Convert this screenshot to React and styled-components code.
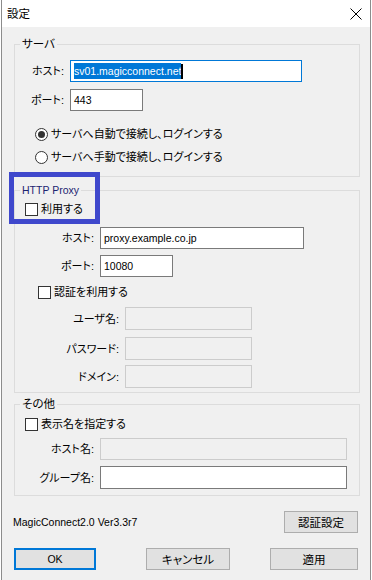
import React from "react";
import styled, { createGlobalStyle } from "styled-components";

const GlobalStyle = createGlobalStyle`
  html, body { margin: 0; padding: 0; background: #fff; }
  body {
    font-family: "Liberation Sans", "Noto Sans CJK JP", sans-serif;
    font-size: 11px;
    line-height: 16px;
    color: #000;
    font-feature-settings: "palt";
  }
`;

const Window = styled.div`
  position: relative;
  box-sizing: border-box;
  width: 370px;
  min-height: 580px;
  margin-left: 1px;
  border-left: 1px solid #8c8c8c;
  border-right: 1px solid #8c8c8c;
  background: #f0f0f0;
`;

const TitleBar = styled.div`
  height: 27px;
  background: #fff;
  display: flex;
  align-items: center;
  justify-content: space-between;
  padding: 0 8px 0 5px;
`;

const Title = styled.span`
  font-size: 11.5px;
`;

const Body = styled.div`
  padding: 10px 10px 0 12px;
`;

const Group = styled.fieldset`
  margin: ${(p) => p.$mt || 0}px 0 0;
  padding: 0 0 ${(p) => p.$pb || 0}px;
  border: 1px solid #dcdcdc;
  min-width: 0;
`;

const Legend = styled.legend`
  margin-left: 5px;
  padding: 0 2px;
  height: 14px;
  line-height: 14px;
  font-size: ${(p) => (p.$latin ? 10.5 : 11.5)}px;
  color: ${(p) => p.$color || "#000"};
`;

const Inner = styled.div`
  display: flex;
  flex-direction: column;
  padding-top: ${(p) => p.$pt || 0}px;
`;

const Row = styled.div`
  display: flex;
  align-items: center;
  height: ${(p) => p.$h || 22}px;
  margin-top: ${(p) => p.$mt || 0}px;
  padding-left: ${(p) => p.$pl || 0}px;
`;

const Label = styled.label`
  flex: none;
  width: ${(p) => p.$w}px;
  margin-right: 6px;
  text-align: right;
  white-space: nowrap;
`;

const TextBox = styled.div`
  box-sizing: border-box;
  width: ${(p) => p.$w}px;
  height: 100%;
  border: 1px solid
    ${(p) => (p.$focus ? "#0078d7" : p.$disabled ? "#cccccc" : "#7a7a7a")};
  background: ${(p) => (p.$disabled ? "#f0f0f0" : "#fff")};
  display: flex;
  align-items: center;
  padding-left: 3px;
  font-size: 10.5px;
  color: #000;
  overflow: hidden;
  white-space: nowrap;
`;

const Selection = styled.span`
  background: #0078d7;
  color: #fff;
  line-height: 16px;
`;

const Caret = styled.span`
  width: 2px;
  height: 15px;
  background: #000;
`;

const Check = styled.span`
  box-sizing: border-box;
  flex: none;
  width: 13px;
  height: 13px;
  border: 1px solid #333;
  background: #fff;
  margin-right: 3px;
`;

const Radio = styled.span`
  box-sizing: border-box;
  flex: none;
  width: 13px;
  height: 13px;
  border: 1px solid #333;
  border-radius: 50%;
  background: #fff;
  margin-right: 3px;
  display: flex;
  align-items: center;
  justify-content: center;
  &::after {
    content: "";
    width: 7px;
    height: 7px;
    border-radius: 50%;
    background: ${(p) => (p.$checked ? "#333" : "transparent")};
  }
`;

const Footer = styled.div`
  display: flex;
  align-items: center;
  justify-content: space-between;
  margin-top: 15px;
  padding-right: 2px;
`;

const Version = styled.span`
  font-size: 10.5px;
  margin-left: -1px;
`;

const ButtonRow = styled.div`
  display: flex;
  margin-top: 15px;
`;

const Button = styled.button`
  box-sizing: border-box;
  width: ${(p) => p.$w}px;
  height: 22px;
  margin: 0 0 0 ${(p) => p.$ml || 0}px;
  padding: 0;
  background: #e1e1e1;
  border: ${(p) => (p.$default ? "2px solid #0078d7" : "1px solid #adadad")};
  font-family: inherit;
  font-feature-settings: "palt";
  font-size: ${(p) => (p.$latin ? 10.5 : 11.5)}px;
  color: #000;
`;

const Annotation = styled.div`
  position: absolute;
  left: 7px;
  top: 172px;
  width: 91px;
  height: 52px;
  box-sizing: border-box;
  border: 5px solid #3f48cc;
  pointer-events: none;
`;

const CloseIcon = () => (
  <svg width="12" height="12" viewBox="0 0 12 12">
    <path d="M0.5 0.5 L11.5 11.5 M11.5 0.5 L0.5 11.5" stroke="#000" strokeWidth="1" />
  </svg>
);

export default function App() {
  return (
    <>
      <GlobalStyle />
      <Window>
        <TitleBar>
          <Title>設定</Title>
          <CloseIcon />
        </TitleBar>
        <Body>
          <Group $pb={11}>
            <Legend>サーバ</Legend>
            <Inner $pt={9}>
              <Row>
                <Label $w={49}>ホスト:</Label>
                <TextBox $w={232} $focus>
                  <Selection>sv01.magicconnect.net</Selection>
                  <Caret />
                </TextBox>
              </Row>
              <Row $mt={7}>
                <Label $w={49}>ポート:</Label>
                <TextBox $w={73}>443</TextBox>
              </Row>
              <Row $h={16} $mt={15} $pl={20}>
                <Radio $checked />
                サーバへ自動で接続し、ログインする
              </Row>
              <Row $h={16} $mt={7} $pl={20}>
                <Radio />
                サーバへ手動で接続し、ログインする
              </Row>
            </Inner>
          </Group>

          <Group $mt={6} $pb={4}>
            <Legend $latin $color="#1c2470">HTTP Proxy</Legend>
            <Inner $pt={4}>
              <Row $h={16} $pl={10}>
                <Check />
                利用する
              </Row>
              <Row $mt={10}>
                <Label $w={79}>ホスト:</Label>
                <TextBox $w={204}>proxy.example.co.jp</TextBox>
              </Row>
              <Row $mt={6}>
                <Label $w={79}>ポート:</Label>
                <TextBox $w={73}>10080</TextBox>
              </Row>
              <Row $h={16} $mt={7} $pl={23}>
                <Check />
                認証を利用する
              </Row>
              <Row $h={23} $mt={7}>
                <Label $w={104}>ユーザ名:</Label>
                <TextBox $w={127} $disabled />
              </Row>
              <Row $h={23} $mt={7}>
                <Label $w={104}>パスワード:</Label>
                <TextBox $w={127} $disabled />
              </Row>
              <Row $h={23} $mt={5}>
                <Label $w={104}>ドメイン:</Label>
                <TextBox $w={127} $disabled />
              </Row>
            </Inner>
          </Group>

          <Group $mt={4} $pb={6}>
            <Legend>その他</Legend>
            <Inner $pt={5}>
              <Row $h={16} $pl={10}>
                <Check />
                表示名を指定する
              </Row>
              <Row $mt={6}>
                <Label $w={79}>ホスト名:</Label>
                <TextBox $w={247} $disabled />
              </Row>
              <Row $h={23} $mt={6}>
                <Label $w={79}>グループ名:</Label>
                <TextBox $w={247} />
              </Row>
            </Inner>
          </Group>

          <Footer>
            <Version>MagicConnect2.0 Ver3.3r7</Version>
            <Button $w={74}>認証設定</Button>
          </Footer>

          <ButtonRow>
            <Button $w={82} $default $latin>OK</Button>
            <Button $w={84} $ml={50}>キャンセル</Button>
            <Button $w={88} $ml={40}>適用</Button>
          </ButtonRow>
        </Body>
        <Annotation />
      </Window>
    </>
  );
}
